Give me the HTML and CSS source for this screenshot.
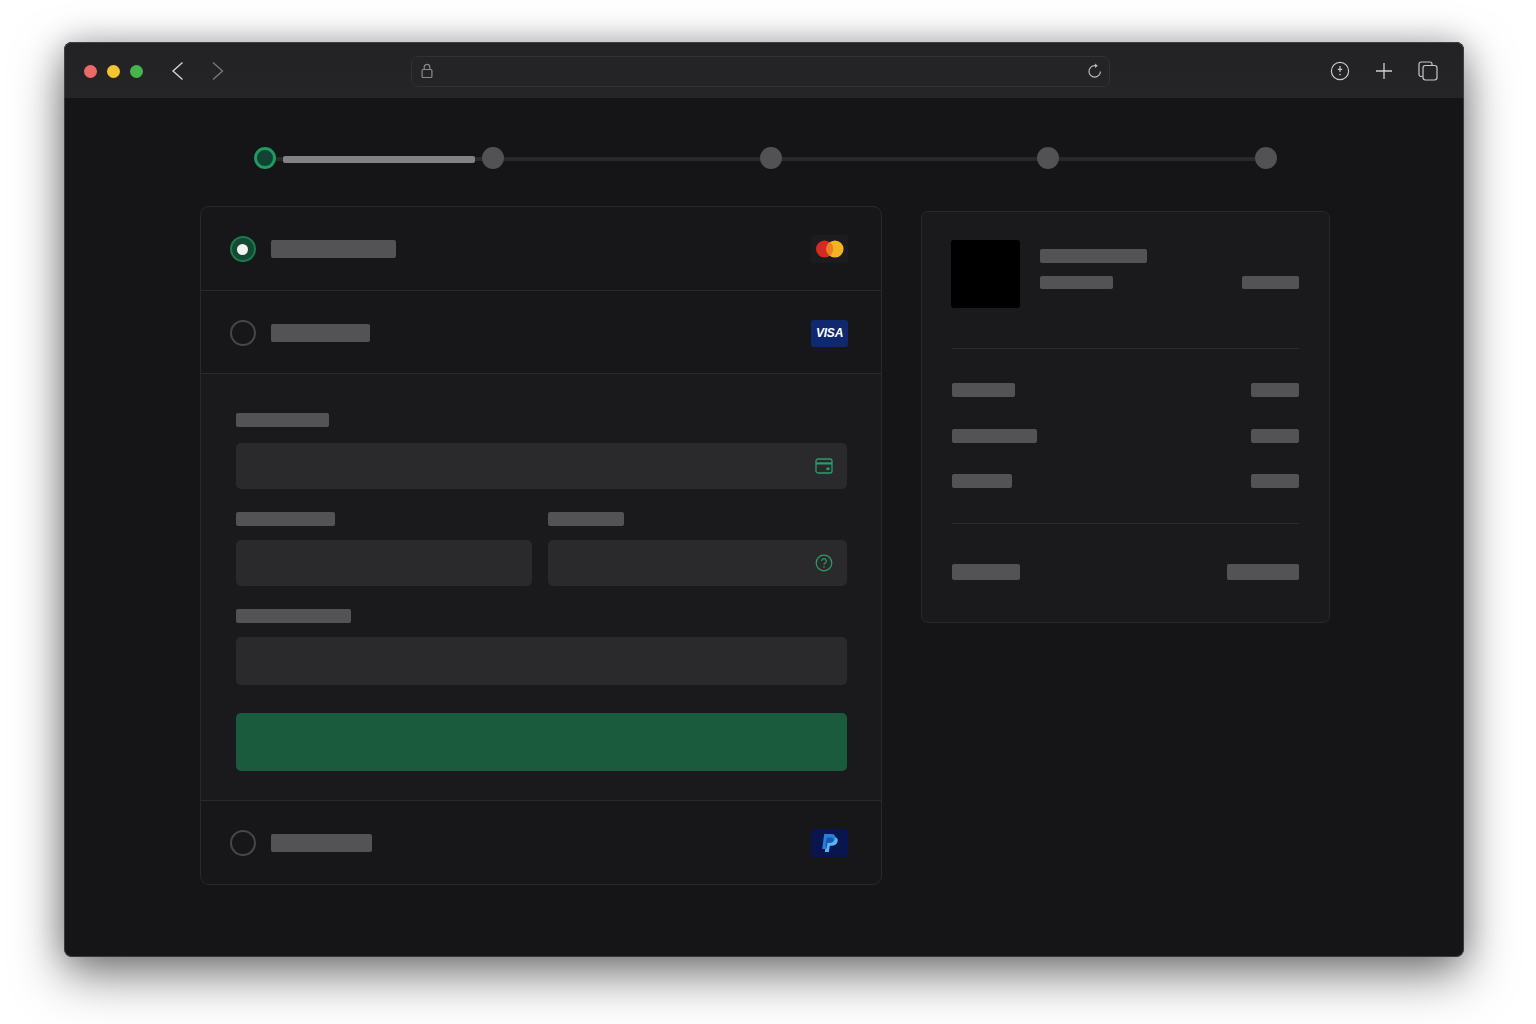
FILE: index.html
```html
<!DOCTYPE html>
<html lang="en">
<head>
<meta charset="utf-8">
<title>Checkout</title>
<link rel="stylesheet" href="styles.css">
</head>
<body>
<div class="window">
  <header class="toolbar">
    <div class="lights"><span class="light red"></span><span class="light yellow"></span><span class="light green"></span></div>
    <div class="nav">
      <svg width="14" height="18" viewBox="0 0 14 18"><path d="M12.500.6 3 9l9.500 8.400" fill="none" stroke="#d4d4d4" stroke-width="1.4"/></svg>
      <svg width="14" height="18" viewBox="0 0 14 18"><path d="M3 .6 12.500 9 3 17.400" fill="none" stroke="#77777a" stroke-width="1.4"/></svg>
    </div>
    <div class="urlbar">
      <svg width="13" height="16" viewBox="0 0 13 16" fill="none" stroke="#8a8a8c" stroke-width="1.2"><rect x="1.100" y="6.500" width="9.800" height="8" rx="1"/><path d="M3.200 6.500V4.200a2.800 2.800 0 0 1 5.600 0v2.300"/></svg>
      <svg class="reload" width="16" height="16" viewBox="0 0 16 16" fill="none" stroke="#b8b8ba" stroke-width="1.2"><path d="M13.400 8.400A5.700 5.700 0 1 1 7.700 2.700h1.600"/><path d="M8 .4 10.800 2.700 8 5z" fill="#b8b8ba" stroke="none"/></svg>
    </div>
    <div class="tools">
      <svg width="20" height="20" viewBox="0 0 20 20" fill="none" stroke="#c8c8ca" stroke-width="1.2"><circle cx="10" cy="10" r="8.600"/><path d="M10 5v6M7.800 8.400h4.400"/><circle cx="10" cy="13.600" r=".8" fill="#c8c8ca" stroke="none"/></svg>
      <svg width="18" height="18" viewBox="0 0 18 18" fill="none" stroke="#cfcfd1" stroke-width="1.3"><path d="M9 1v16M1 9h16"/></svg>
      <svg width="20" height="20" viewBox="0 0 20 20" fill="none" stroke="#c8c8ca" stroke-width="1.2"><path d="M4.700 15.500H3a2 2 0 0 1-2-2V3a2 2 0 0 1 2-2h9a2 2 0 0 1 2 2v1.200"/><rect x="5" y="4.500" width="14" height="14.500" rx="2.400"/></svg>
    </div>
  </header>

  <main class="page">
    <div class="stepper">
      <span class="step step-active"></span>
      <span class="seg seg-first"><span class="seg-fill"></span></span>
      <span class="step"></span>
      <span class="seg seg-second"></span>
      <span class="step"></span>
      <span class="seg seg-third"></span>
      <span class="step"></span>
      <span class="seg seg-last"></span>
      <span class="step"></span>
    </div>

    <div class="columns">
      <section class="methods">
        <div class="method method-first">
          <span class="radio radio-on"></span>
          <span class="bar bar-title w125"></span>
          <span class="logo logo-mc">
            <svg width="30" height="18" viewBox="0 0 30 18"><circle cx="9.600" cy="9" r="8.600" fill="#d32a22"/><circle cx="20" cy="9" r="8.600" fill="#f4b323"/><path d="M14.800 2.100a8.600 8.600 0 0 1 0 13.800 8.600 8.600 0 0 1 0-13.800z" fill="#ea7f20"/></svg>
          </span>
        </div>
        <div class="method method-second">
          <span class="radio"></span>
          <span class="bar bar-title w99"></span>
          <span class="logo logo-visa">VISA</span>
        </div>
        <form class="form">
          <span class="bar label label-first w93"></span>
          <div class="input">
            <svg width="18" height="16" viewBox="0 0 18 16" fill="none" stroke="#2b9d69" stroke-width="1.300"><rect x="1" y="1" width="16" height="14" rx="2"/><path d="M1 5.400h16" stroke-width="2.200"/><rect x="11.500" y="9.500" width="3" height="2.600" fill="#2b9d69" stroke="none"/></svg>
          </div>
          <div class="pair">
            <div class="field">
              <span class="bar label w99"></span>
              <div class="input"></div>
            </div>
            <div class="field">
              <span class="bar label w76"></span>
              <div class="input">
                <svg width="18" height="18" viewBox="0 0 18 18" fill="none" stroke="#2b9d69" stroke-width="1.200"><circle cx="9" cy="9" r="7.800"/><path d="M6.700 7a2.300 2.300 0 1 1 3.400 2c-.8.500-1.100.9-1.100 1.800"/><circle cx="9" cy="13" r=".8" fill="#2b9d69" stroke="none"/></svg>
              </div>
            </div>
          </div>
          <div class="field field-wide">
            <span class="bar label w115"></span>
            <div class="input input-tall"></div>
          </div>
          <div class="submit"></div>
        </form>
        <div class="method method-end">
          <span class="radio"></span>
          <span class="bar bar-title w101"></span>
          <span class="logo logo-pp">
            <svg width="18" height="20" viewBox="0 0 18 20"><path d="M5.600 4h7.200c3 0 4.400 1.800 3.900 4.300-.5 2.800-2.600 4.400-5.400 4.400H8.800L7.900 19H3.900z" fill="#58b4ee"/><path d="M3.200 1h7.200c3 0 4.400 1.800 3.900 4.300-.5 2.800-2.600 4.400-5.400 4.400H6.400L5.500 16H1.200z" fill="#2a7fdc"/><path d="M5.800 4.600h4.600c1.800.6 2.300 2 1.900 3.500-.5 1-1.500 1.600-2.900 1.600H6.400L5.500 16 4.400 12z" fill="#1a55b4"/></svg>
          </span>
        </div>
      </section>

      <aside class="summary">
        <div class="item">
          <div class="thumb"></div>
          <div class="item-info">
            <span class="bar line-14 w107"></span>
            <div class="spread">
              <span class="bar line-13 w73"></span>
              <span class="bar line-13 w57"></span>
            </div>
          </div>
        </div>
        <div class="rule"></div>
        <div class="totals">
          <div class="spread"><span class="bar line-14 w63"></span><span class="bar line-14 w48"></span></div>
          <div class="spread"><span class="bar line-14 w85"></span><span class="bar line-14 w48"></span></div>
          <div class="spread"><span class="bar line-14 w60"></span><span class="bar line-14 w48"></span></div>
        </div>
        <div class="rule"></div>
        <div class="spread grand"><span class="bar line-16 w68"></span><span class="bar line-16 w72"></span></div>
      </aside>
    </div>
  </main>
</div>
</body>
</html>
```
FILE: styles.css
```css
* { box-sizing: border-box; }
html, body { margin: 0; height: 100%; }
body { background: #fff; padding: 42px 72px 0 64px; font-family: "Liberation Sans", Arial, sans-serif; overflow: hidden; }

.window {
  width: 1400px; height: 915px; border-radius: 8px; overflow: hidden;
  background: #151517;
  outline: 1px solid rgba(90,90,92,.55); outline-offset: -1px;
  box-shadow: 0 18px 50px rgba(0,0,0,.5), 0 0 30px rgba(0,0,0,.22);
}

.toolbar {
  height: 56px; display: flex; align-items: center;
  background: linear-gradient(#222224, #252527);
  padding: 2px 0 0 20px;
}
.lights { display: flex; gap: 10px; width: 81px; }
.light { width: 13px; height: 13px; border-radius: 50%; }
.red { background: #ec6a66; }
.yellow { background: #f6c42f; }
.green { background: #45b54c; }
.nav { display: flex; gap: 26px; width: 241px; margin-left: 5px; }
.urlbar {
  width: 699px; height: 31px; border: 1px solid #323234; border-radius: 7px; background: #242426;
  display: flex; align-items: center; justify-content: space-between; padding: 0 6px 0 9px;
}
.tools { display: flex; align-items: center; gap: 25px; margin-left: 220px; }

.page { padding: 49px 0 0 136px; }

.stepper { display: flex; align-items: center; margin-left: 54px; height: 22px; }
.step { flex: none; width: 22px; height: 22px; border-radius: 50%; background: #525254; }
.step-active { background: #124232; border: 3px solid #1f9a62; }
.seg { flex: none; height: 4px; background: #29292b; margin-top: 1px; display: block; }
.seg-first { width: 205.5px; position: relative; }
.seg-second { width: 256px; }
.seg-third { width: 255px; }
.seg-last { width: 196px; }
.seg-fill { position: absolute; left: 7px; right: 6.5px; top: -.5px; height: 7px; background: #828284; border-radius: 2px; }

.columns { display: flex; align-items: flex-start; gap: 39px; margin-top: 37px; }

.methods { width: 682px; height: 679px; border: 1px solid #29292b; border-radius: 9px; background: #171719; }
.method { display: flex; align-items: center; height: 83px; padding: 0 33px 0 28.5px; border-bottom: 1px solid #2a2a2c; }
.method-first { height: 84px; padding-top: 1px; }
.method-second { padding-top: 2px; }
.method-end { border-bottom: 0; padding-top: 1px; }
.radio { flex: none; width: 26px; height: 26px; border-radius: 50%; border: 2px solid #474749; margin-right: 15.5px; }
.radio-on { background: #124a33; border-color: #1d7a50; display: flex; align-items: center; justify-content: center; }
.radio-on::after { content: ""; width: 11px; height: 11px; border-radius: 50%; background: #f2f2f2; }

.bar { display: block; background: #535355; border-radius: 2px; flex: none; }
.bar-title { height: 18px; }
.logo { margin-left: auto; width: 37px; height: 28px; border-radius: 3px; display: flex; align-items: center; justify-content: center; }
.logo-mc { background: #1c1c1e; }
.logo-visa { height: 27px; background: #10286f; color: #fff; font-size: 12px; font-weight: 700; font-style: italic; letter-spacing: -.2px; }
.logo-pp { background: #08154f; }

.form { padding: 39px 34px 29px 35px; height: 427px; border-bottom: 1px solid #2a2a2c; background: #1a1a1c; display: flex; flex-direction: column; }
.label { height: 14px; margin-bottom: 14px; }
.label-first { margin-bottom: 16px; }
.input { height: 46px; background: #2a2a2c; border-radius: 5px; display: flex; align-items: center; justify-content: flex-end; padding-right: 14px; }
.input-tall { height: 48px; }
.pair { display: grid; grid-template-columns: 296px 299px; gap: 16px; margin-top: 23px; }
.field-wide { margin-top: 23px; }
.submit { height: 58px; margin-top: 28px; background: #1a5a3d; border-radius: 5px; }

.summary { width: 409px; height: 412px; margin-top: 5px; border: 1px solid #29292b; border-radius: 7px; background: #1a1a1c; padding: 28px 30px 0 29px; }
.item { display: flex; gap: 20px; margin-bottom: 40px; }
.thumb { flex: none; width: 69px; height: 68px; background: #000; border-radius: 3px; }
.item-info { flex: 1; padding-top: 9px; display: flex; flex-direction: column; gap: 13px; }
.spread { display: flex; justify-content: space-between; }
.rule { height: 1px; background: #2b2b2d; margin-left: 1px; }
.totals { padding: 34px 0 35px 1px; display: flex; flex-direction: column; gap: 31.5px; }
.grand { margin-top: 40px; padding-left: 1px; }

.line-13 { height: 13px; }
.line-14 { height: 14px; }
.line-16 { height: 16px; }
.w48 { width: 48px; } .w57 { width: 57px; } .w60 { width: 60px; } .w63 { width: 63px; } .w68 { width: 68px; }
.w72 { width: 72px; } .w73 { width: 73px; } .w76 { width: 76px; } .w85 { width: 85px; } .w93 { width: 93px; }
.w99 { width: 99px; } .w101 { width: 101px; } .w107 { width: 107px; } .w115 { width: 115px; } .w125 { width: 125px; }
```
